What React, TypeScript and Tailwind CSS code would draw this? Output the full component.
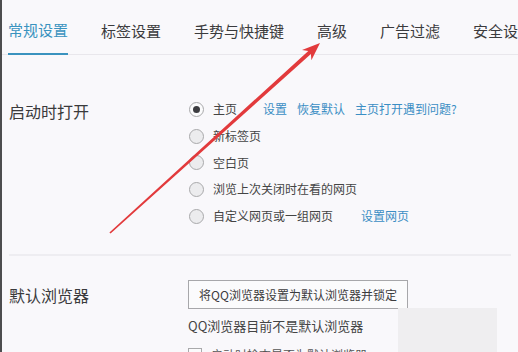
import React from "react";

const font = { fontFamily: '"Noto Sans CJK SC", "Noto Sans", sans-serif' };

function Radio({ checked, label, extra }: { checked?: boolean; label: string; extra?: React.ReactNode }) {
  return (
    <div className="flex h-[26.7px] items-center">
      <div
        className={
          "flex h-[15px] w-[15px] items-center justify-center rounded-full border border-[#a9a9ab] " +
          (checked ? "bg-[#fbfbfc]" : "bg-[#ececee]")
        }
      >
        {checked && <div className="h-[7px] w-[7px] rounded-full bg-[#3c3c40]" />}
      </div>
      <span className="ml-[9px] text-[12px] text-[#444]">{label}</span>
      {extra}
    </div>
  );
}

export default function App() {
  const tabs = ["常规设置", "标签设置", "手势与快捷键", "高级", "广告过滤", "安全设置"];
  return (
    <div
      className="relative h-[352px] w-[518px] overflow-hidden border-l-2 border-[#4d4d4f] bg-[#f9f8fb]"
      style={font}
    >
      {/* tabs */}
      <div className="flex h-[55px] gap-[33px] border-b border-[#e9e7ec] pl-[6px] whitespace-nowrap">
        {tabs.map((t, i) => (
          <div
            key={t}
            className={
              "flex h-[55px] shrink-0 items-center pt-[8px] text-[15px] " +
              (i === 0 ? "border-b-2 border-[#3a93bf] text-[#3a93bf]" : "text-[#3b3b3d]")
            }
          >
            {t}
          </div>
        ))}
      </div>

      {/* startup */}
      <div className="mx-[7px] flex border-b-2 border-[#eeedf1] pb-[25px] pt-[41px]">
        <div className="w-[180px] pt-[3px] text-[16px] leading-[24px] text-[#3a3a3c]">启动时打开</div>
        <div className="flex flex-col">
          <Radio
            checked
            label="主页"
            extra={
              <div className="ml-[26px] flex gap-[10px] text-[12px] text-[#3b8ec4]">
                <span>设置</span>
                <span>恢复默认</span>
                <span>主页打开遇到问题?</span>
              </div>
            }
          />
          <Radio label="新标签页" />
          <Radio label="空白页" />
          <Radio label="浏览上次关闭时在看的网页" />
          <Radio
            label="自定义网页或一组网页"
            extra={<span className="ml-[28px] text-[12px] text-[#3b8ec4]">设置网页</span>}
          />
        </div>
      </div>

      {/* default browser */}
      <div className="mx-[7px] flex pt-[24px]">
        <div className="w-[179px] pt-[3px] text-[16px] leading-[24px] text-[#3a3a3c]">默认浏览器</div>
        <div className="flex flex-col">
          <div className="flex h-[29px] w-[220px] items-center justify-center border border-[#a7a7aa] bg-[#fbfbfc] text-[12px] text-[#3c3c3e]">
            将QQ浏览器设置为默认浏览器并锁定
          </div>
          <div className="mt-[7px] text-[13px] leading-[20px] text-[#444]">QQ浏览器目前不是默认浏览器</div>
          <div className="mt-[12px] flex items-start">
            <div className="h-[14px] w-[14px] border border-[#a9a9ab] bg-[#fbfbfc]" />
            <span className="ml-[9px] text-[12px] leading-[14px] text-[#555]">启动时检查是否为默认浏览器</span>
          </div>
        </div>
      </div>

      {/* watermark patch */}
      <div className="absolute left-[396px] top-[308px] h-[44px] w-[99px] bg-[#efeef0]" />

      {/* red arrow */}
      <svg className="absolute left-0 top-0" width="518" height="352" viewBox="0 0 518 352">
        <polygon
          points="107.4,232.4 306.3,50.9 300,49.9 318,43 309.4,60.3 308.9,53.9 108.6,233.6"
          fill="#e23a3c"
        />
      </svg>
    </div>
  );
}
